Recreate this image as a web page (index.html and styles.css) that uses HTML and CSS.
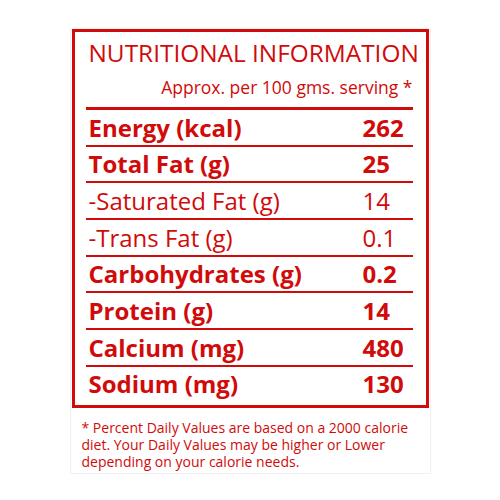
FILE: index.html
```html
<!DOCTYPE html>
<html lang="en">
<head>
  <meta charset="UTF-8" />
  <title>Nutritional Information</title>
  <link rel="stylesheet" href="styles.css">
</head>
<body>
  <div class="label">
    <div class="panel">
      <div class="panel-head">
        <h1 class="title">NUTRITIONAL INFORMATION</h1>
        <p class="serving">Approx. per 100 gms. serving *</p>
      </div>
      <div class="row bold"><span>Energy (kcal)</span><span>262</span></div>
      <div class="row bold"><span>Total Fat (g)</span><span>25</span></div>
      <div class="row"><span>-Saturated Fat (g)</span><span>14</span></div>
      <div class="row"><span>-Trans Fat (g)</span><span>0.1</span></div>
      <div class="row bold"><span>Carbohydrates (g)</span><span>0.2</span></div>
      <div class="row bold"><span>Protein (g)</span><span>14</span></div>
      <div class="row bold"><span>Calcium (mg)</span><span>480</span></div>
      <div class="row bold"><span>Sodium (mg)</span><span>130</span></div>
    </div>
    <p class="note">* Percent Daily Values are based on a 2000 calorie diet. Your Daily Values may be higher or Lower depending on your calorie needs.</p>
  </div>
</body>
</html>
```

FILE: styles.css
```css
body {
  margin: 0;
  background: #fff;
  font-family: "Open Sans", "Lato", sans-serif;
  color: #d10a0a;
  display: flex;
  justify-content: center;
}
.label {
  width: 357px;
  margin-top: 28px;
  border: 1px solid #f1f1f1;
  padding: 0 1px 3px;
}
.panel {
  border: 3px solid #d10a0a;
  padding: 6px 13px 3px 11px;
}
.panel-head {
  border-bottom: 3px solid #d10a0a;
  padding-bottom: 10px;
}
.title {
  margin: 0;
  padding-left: 3px;
  font-size: 24.4px;
  line-height: 30px;
  font-weight: 400;
  white-space: nowrap;
}
.serving {
  margin: 9px 0 0;
  font-size: 17.5px;
  line-height: 20px;
  text-align: right;
}
.row {
  display: grid;
  grid-template-columns: 274px 1fr;
  padding: 2.5px 0 2.2px 3px;
  font-size: 24px;
  line-height: 30px;
  border-bottom: 2px solid #d10a0a;
}
.row:first-of-type {
  padding-top: 6px;
}
.row:last-child {
  border-bottom: none;
}
.bold {
  font-weight: 700;
}
.note {
  margin: 11px 0 0;
  padding: 0 14px 0 10px;
  font-size: 14px;
  line-height: 17px;
}
```
